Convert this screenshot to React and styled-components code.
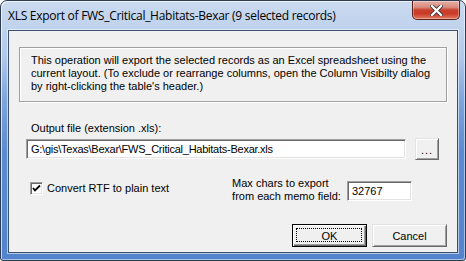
import React from 'react';
import { styled, createGlobalStyle } from 'styled-components';

const Global = createGlobalStyle`
  html, body { margin: 0; padding: 0; background: #ffffff; }
  body { width: 466px; height: 261px; overflow: hidden; }
`;

const Window = styled.div`
  box-sizing: border-box;
  width: 466px;
  height: 261px;
  display: flex;
  flex-direction: column;
  border: 1px solid #2d3c52;
  border-radius: 7px 7px 3px 3px;
  background: linear-gradient(to bottom, #c9daf0 0px, #bfd2ec 30px, #b2c9ea 55px, #7da4dc 100px, #5b8bd1 150px, #5383cc 261px);
  box-shadow: inset 1px 1px 0 rgba(255,255,255,0.7), inset -1px -1px 0 rgba(255,255,255,0.5);
  font-family: "Liberation Sans", Tahoma, sans-serif;
  font-size: 11px;
  color: #000;
`;

const TitleBar = styled.div`
  height: 29px;
  display: flex;
  align-items: flex-start;
  justify-content: space-between;
  padding-left: 7px;
`;

const Title = styled.div`
  margin-top: 8px;
  font-family: "Open Sans", "Noto Sans", sans-serif;
  font-size: 12px;
  line-height: 14px;
  letter-spacing: -0.28px;
  color: #000;
`;

const CloseButton = styled.div`
  box-sizing: border-box;
  width: 48px;
  height: 19px;
  margin-right: 5px;
  border: 1px solid #5d2219;
  border-top: none;
  border-radius: 0 0 5px 5px;
  background: linear-gradient(to bottom, #e6b0a6 0%, #d88a7c 35%, #c8412e 50%, #cc3b28 70%, #e07a62 100%);
  box-shadow: inset 0 0 0 1px rgba(255,255,255,0.35);
  display: flex;
  align-items: center;
  justify-content: center;
`;

const Body = styled.div`
  flex: 1;
  display: flex;
  padding: 0 7px 7px 7px;
`;

const Client = styled.div`
  box-sizing: border-box;
  flex: 1;
  background: #f0f0f0;
  border: 1px solid #3b506d;
  box-shadow: 0 0 0 1px rgba(255,255,255,0.55);
  display: flex;
  flex-direction: column;
  padding: 0 10px 0 10px;
`;

const InfoBox = styled.div`
  box-sizing: border-box;
  margin-top: 16px;
  height: 55px;
  border: 1px solid #a0a0a0;
  box-shadow: inset 1px 1px 0 #fff, 1px 1px 0 #fff;
  padding: 6px 11px 0 11px;
  line-height: 13px;
  white-space: nowrap;
`;

const Label = styled.div`
  margin-top: ${p => p.$top || 0}px;
  margin-left: ${p => p.$left || 0}px;
  line-height: 13px;
  white-space: nowrap;
`;

const Row = styled.div`
  display: flex;
  align-items: ${p => p.$align || 'flex-start'};
  margin-top: ${p => p.$top || 0}px;
`;

const TextBox = styled.div`
  box-sizing: border-box;
  width: ${p => p.$width}px;
  height: 20px;
  margin-left: ${p => p.$left || 0}px;
  background: #fff;
  border-top: 1px solid #a0a0a0;
  border-left: 1px solid #a0a0a0;
  border-right: 1px solid #fff;
  border-bottom: 1px solid #fff;
  box-shadow: inset 1px 1px 0 #696969, inset -1px -1px 0 #e3e3e3;
  padding: 3px 0 0 4px;
  line-height: 13px;
  letter-spacing: ${p => p.$tight ? '-0.25px' : 'normal'};
  white-space: nowrap;
  overflow: hidden;
`;

const Button = styled.div`
  box-sizing: border-box;
  width: ${p => p.$width}px;
  height: ${p => p.$height}px;
  margin-left: ${p => p.$left || 0}px;
  margin-top: ${p => p.$top || 0}px;
  background: #f0f0f0;
  border-top: 1px solid #e3e3e3;
  border-left: 1px solid #e3e3e3;
  border-right: 1px solid #696969;
  border-bottom: 1px solid #696969;
  box-shadow: inset 1px 1px 0 #fff, inset -1px -1px 0 #a0a0a0;
  display: flex;
  align-items: center;
  justify-content: center;
  position: relative;
  ${p => p.$default && `
    border: 1px solid #000;
    box-shadow: inset 1px 1px 0 #fff, inset -1px -1px 0 #696969, inset -2px -2px 0 #a0a0a0;
  `}
`;

const Focus = styled.span`
  position: absolute;
  inset: 3px 4px 4px 3px;
  border: 1px dotted #000;
`;

const Check = styled.div`
  box-sizing: border-box;
  width: 13px;
  height: 13px;
  margin-left: 11px;
  background: #fff;
  border-top: 1px solid #a0a0a0;
  border-left: 1px solid #a0a0a0;
  border-right: 1px solid #fff;
  border-bottom: 1px solid #fff;
  box-shadow: inset 1px 1px 0 #696969, inset -1px -1px 0 #e3e3e3;
  display: flex;
  align-items: center;
  justify-content: center;
`;

const ButtonBar = styled.div`
  display: flex;
  justify-content: flex-end;
  gap: 5px;
  margin-top: 21px;
`;

export default function App() {
  return (
    <>
      <Global />
      <Window>
        <TitleBar>
          <Title>XLS Export of FWS_Critical_Habitats-Bexar (9 selected records)</Title>
          <CloseButton>
            <svg width="13" height="11" viewBox="0 0 13 11">
              <path d="M2 1 L11 10 M11 1 L2 10" stroke="#3b3b3b" strokeWidth="4" strokeLinecap="square" />
              <path d="M2 1 L11 10 M11 1 L2 10" stroke="#ffffff" strokeWidth="2.2" strokeLinecap="square" />
            </svg>
          </CloseButton>
        </TitleBar>
        <Body>
          <Client>
            <InfoBox>
              This operation will export the selected records as an Excel spreadsheet using the<br />
              current layout. (To exclude or rearrange columns, open the Column Visibilty dialog<br />
              by right-clicking the table's header.)
            </InfoBox>
            <Label $top={20} $left={12}>Output file (extension .xls):</Label>
            <Row $top={3} $align="flex-start">
              <TextBox $width={380} $left={7} $tight style={{ marginTop: 1 }}>
                G:\gis\Texas\Bexar\FWS_Critical_Habitats-Bexar.xls
              </TextBox>
              <Button $width={24} $height={22} $left={9}>
                <span style={{ marginTop: 2, letterSpacing: 1 }}>...</span>
              </Button>
            </Row>
            <Row $top={18}>
              <Row style={{ marginTop: 4 }} $align="center">
                <Check>
                  <svg width="9" height="9" viewBox="0 0 9 9">
                    <path d="M1 4 L3 6.5 L8 1.5" fill="none" stroke="#000" strokeWidth="1.8" />
                  </svg>
                </Check>
                <Label $left={4}>Convert RTF to plain text</Label>
              </Row>
              <Label $left={63} style={{ marginTop: -1 }}>Max chars to export<br />from each memo field:</Label>
              <TextBox $width={65} $left={6} style={{ marginTop: 3 }}>32767</TextBox>
            </Row>
            <ButtonBar>
              <Button $width={75} $height={23} $default>
                <Focus />OK
              </Button>
              <Button $width={75} $height={23}>Cancel</Button>
            </ButtonBar>
          </Client>
        </Body>
      </Window>
    </>
  );
}
